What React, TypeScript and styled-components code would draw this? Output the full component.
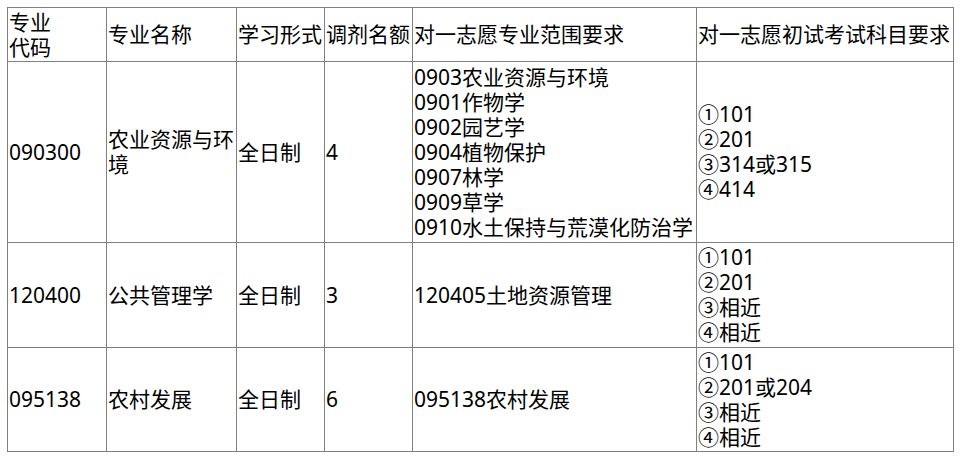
import React from "react";
import styled, { createGlobalStyle } from "styled-components";

const Global = createGlobalStyle`
  html, body { margin: 0; padding: 0; background: #ffffff; }
  body { padding: 7px; font-family: "Noto Sans", "Noto Sans CJK SC", sans-serif; color: #000; }
`;

const Table = styled.table`
  border-collapse: collapse;
  table-layout: fixed;
  width: 946px;
  border: 1px solid #808080;
  font-size: 21px;
  line-height: 25px;
`;

const Row = styled.tr<{ $h: number }>`
  height: ${(p) => p.$h}px;
`;

const Cell = styled.td`
  border: 1px solid #808080;
  padding: 0 1px;
  vertical-align: middle;
  text-align: left;
  overflow: hidden;
  word-break: break-all;
`;

const Line = styled.div`
  white-space: nowrap;
`;

const widths = [99, 130, 88, 88, 284, 257];

type RowData = {
  h: number;
  code: string;
  name: string;
  form: string;
  quota: string;
  range: string[];
  subjects: string[];
};

const rows: RowData[] = [
  {
    h: 181,
    code: "090300",
    name: "农业资源与环境",
    form: "全日制",
    quota: "4",
    range: [
      "0903农业资源与环境",
      "0901作物学",
      "0902园艺学",
      "0904植物保护",
      "0907林学",
      "0909草学",
      "0910水土保持与荒漠化防治学",
    ],
    subjects: ["①101", "②201", "③314或315", "④414"],
  },
  {
    h: 105,
    code: "120400",
    name: "公共管理学",
    form: "全日制",
    quota: "3",
    range: ["120405土地资源管理"],
    subjects: ["①101", "②201", "③相近", "④相近"],
  },
  {
    h: 104,
    code: "095138",
    name: "农村发展",
    form: "全日制",
    quota: "6",
    range: ["095138农村发展"],
    subjects: ["①101", "②201或204", "③相近", "④相近"],
  },
];

export default function App() {
  return (
    <>
      <Global />
      <Table>
        <colgroup>
          {widths.map((w, i) => (
            <col key={i} style={{ width: w }} />
          ))}
        </colgroup>
        <tbody>
          <Row $h={54}>
            <Cell>
              专业
              <br />
              代码
            </Cell>
            <Cell>专业名称</Cell>
            <Cell>学习形式</Cell>
            <Cell>调剂名额</Cell>
            <Cell>对一志愿专业范围要求</Cell>
            <Cell>对一志愿初试考试科目要求</Cell>
          </Row>
          {rows.map((r) => (
            <Row key={r.code} $h={r.h}>
              <Cell>{r.code}</Cell>
              <Cell>{r.name}</Cell>
              <Cell>{r.form}</Cell>
              <Cell>{r.quota}</Cell>
              <Cell>
                {r.range.map((t) => (
                  <Line key={t}>{t}</Line>
                ))}
              </Cell>
              <Cell>
                {r.subjects.map((t) => (
                  <Line key={t}>{t}</Line>
                ))}
              </Cell>
            </Row>
          ))}
        </tbody>
      </Table>
    </>
  );
}
